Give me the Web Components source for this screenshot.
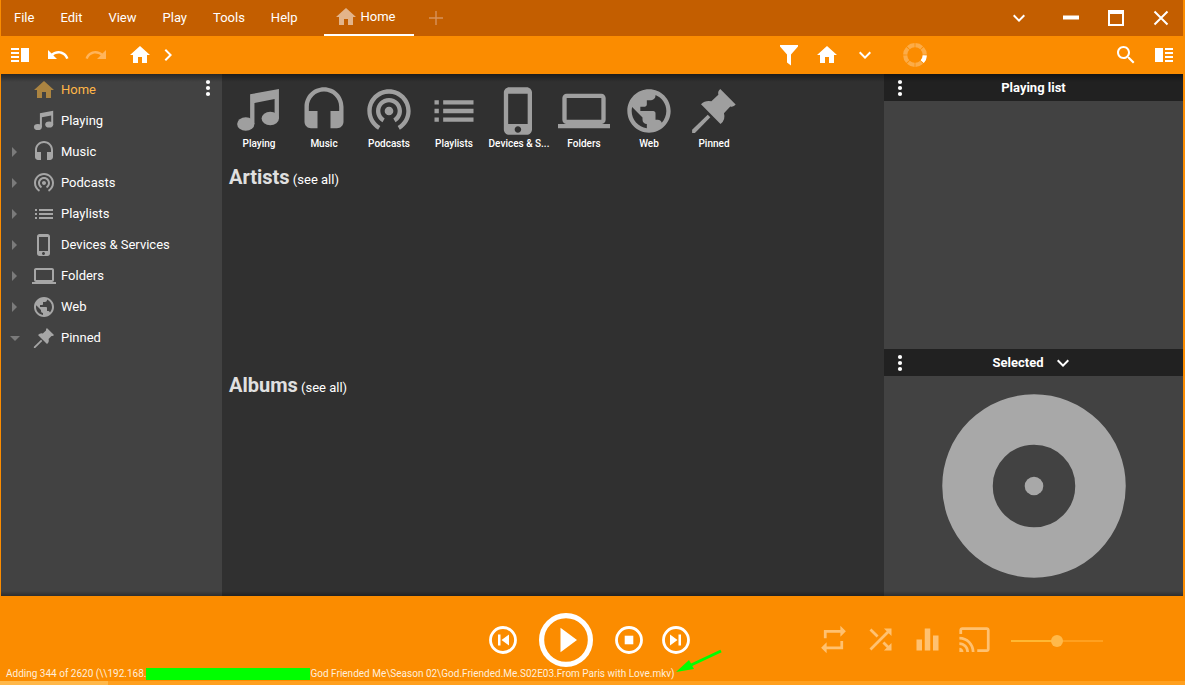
<!DOCTYPE html>
<html lang="en">
<head>
<meta charset="utf-8">
<title>Media player</title>
<style>
  html, body { margin: 0; }
  body { font: 400 13px/16px Roboto, sans-serif; color: #fff; background: #fb8c00; }
</style>
</head>
<body>
<mm-app></mm-app>
<script>
const ICONS = {
  home: '<path d="M10 20v-6h4v6h5v-8h3L12 3 2 12h3v8z"/>',
  plus: '<path d="M19 12.7h-6.3V19h-1.4v-6.3H5v-1.4h6.3V5h1.4v6.3H19z"/>',
  down: '<path d="M16.59 8.59L12 13.17 7.41 8.59 6 10l6 6 6-6z"/>',
  right: '<path d="M10 6L8.59 7.41 13.17 12l-4.58 4.59L10 18l6-6z"/>',
  min: '<path d="M4 9.5h16v4H4z"/>',
  max: '<path d="M4 4h16v16H4zM6 8v10h12V8z" fill-rule="evenodd"/>',
  close: '<path d="M5.5 5.5l13 13M18.5 5.5l-13 13" stroke="currentColor" stroke-width="2"/>',
  splitL: '<path d="M3 15h8v-2H3v2zm0 4h8v-2H3v2zm0-8h8V9H3v2zm0-6v2h8V5H3zm10 0h8v14h-8V5z"/>',
  splitR: '<path d="M13 15h8v-2h-8v2zm0 4h8v-2h-8v2zm0-8h8V9h-8v2zm0-6v2h8V5h-8zM3 5h8v14H3z"/>',
  undo: '<path d="M12.5 8c-2.65 0-5.05.99-6.9 2.6L2 7v9h9l-3.62-3.62c1.39-1.16 3.16-1.88 5.12-1.88 3.54 0 6.55 2.31 7.6 5.5l2.37-.78C21.08 11.03 17.15 8 12.5 8z"/>',
  redo: '<path d="M18.4 10.6C16.55 8.99 14.15 8 11.5 8c-4.65 0-8.58 3.03-9.96 7.22L3.9 16c1.05-3.19 4.05-5.5 7.6-5.5 1.95 0 3.73.72 5.12 1.88L13 16h9V7l-3.6 3.6z"/>',
  filter: '<path d="M3 2h18v1.5l-7 8V22.5l-4-3V11.500L3 3.500z"/>',
  search: '<path d="M15.5 14h-.79l-.28-.27C15.41 12.59 16 11.110 16 9.500 16 5.910 13.090 3 9.500 3S3 5.910 3 9.500 5.910 16 9.500 16c1.610 0 3.090-.590 4.230-1.570l.270.280v.790l5 4.990L20.490 19l-4.990-5zm-6 0C7.010 14 5 11.990 5 9.500S7.010 5 9.500 5 14 7.010 14 9.500 11.990 14 9.500 14z"/>',
  spinner: '<g fill="none" stroke="currentColor" stroke-width="4.200"><circle cx="12" cy="12" r="9.800" pathLength="80" stroke-dasharray="9 1" stroke-dashoffset="-.5" opacity=".28"/><circle cx="12" cy="12" r="9.800" pathLength="80" stroke-dasharray="9 71" stroke-dashoffset="-.5"/></g>',
  dots: '<circle cx="12" cy="6" r="2.100"/><circle cx="12" cy="12" r="2.100"/><circle cx="12" cy="18" r="2.100"/>',
  note: '<path d="M7.900 4.300L21.200 1.800V15.500h-2V6.500L9.900 8.300V18h-2z"/><ellipse cx="5.900" cy="18" rx="4" ry="3.100"/><ellipse cx="17.200" cy="15.500" rx="4" ry="3.100"/>',
  headset: '<path d="M12 1c-4.970 0-9 4.030-9 9v7c0 1.660 1.340 3 3 3h3v-8H5v-2c0-3.870 3.130-7 7-7s7 3.130 7 7v2h-4v8h3c1.660 0 3-1.340 3-3v-7c0-4.970-4.030-9-9-9z"/>',
  podcast: '<path transform="translate(0 -1)" d="M12 11c-1.100 0-2 .9-2 2s.9 2 2 2 2-.9 2-2-.9-2-2-2zm6 2c0-3.310-2.690-6-6-6s-6 2.690-6 6c0 2.220 1.210 4.150 3 5.190l1-1.740c-1.190-.7-2-1.970-2-3.450 0-2.210 1.790-4 4-4s4 1.790 4 4c0 1.480-.81 2.750-2 3.450l1 1.740c1.790-1.040 3-2.970 3-5.190zM12 3C6.480 3 2 7.480 2 13c0 3.700 2.010 6.920 4.990 8.650l1-1.730C5.610 18.530 4 15.960 4 13c0-4.420 3.580-8 8-8s8 3.580 8 8c0 2.960-1.610 5.530-4 6.920l1 1.730c2.990-1.730 5-4.950 5-8.650 0-5.520-4.480-10-10-10z"/>',
  list: '<path d="M3 13h2v-2H3v2zm0 4h2v-2H3v2zm0-8h2V7H3v2zm4 4h14v-2H7v2zm0 4h14v-2H7v2zM7 7v2h14V7H7z"/>',
  phone: '<path d="M15.500 1h-8C6.120 1 5 2.120 5 3.500v17C5 21.880 6.120 23 7.500 23h8c1.380 0 2.500-1.120 2.500-2.500v-17C18 2.120 16.880 1 15.500 1zm-4 21c-.83 0-1.500-.67-1.500-1.500s.67-1.500 1.500-1.500 1.500.67 1.500 1.500-.67 1.500-1.500 1.500zm4.500-4H7V4h9v14z"/>',
  laptop: '<path d="M20 18c1.100 0 2-.9 2-2V6c0-1.100-.9-2-2-2H4c-1.100 0-2 .9-2 2v10c0 1.100.9 2 2 2H0v2h24v-2h-4zM4 6h16v10H4V6z"/>',
  globe: '<path d="M12 2C6.480 2 2 6.480 2 12s4.480 10 10 10 10-4.480 10-10S17.520 2 12 2zm-1 17.930c-3.950-.49-7-3.850-7-7.930 0-.62.08-1.210.21-1.790L9 15v1c0 1.100.9 2 2 2v1.930zm6.900-2.540c-.26-.81-1-1.390-1.900-1.390h-1v-3c0-.55-.45-1-1-1H8v-2h2c.55 0 1-.45 1-1V7h2c1.100 0 2-.9 2-2v-.41c2.930 1.190 5 4.060 5 7.410 0 2.080-.8 3.970-2.100 5.390z"/>',
  pin: '<path d="M14.900 1.900L22 9q-.9 1.300-2.500.9L16.600 13q.9 3-1.600 5L6 8.900q2-2 4.800-1.400L14 4.500q-.4-1.500.9-2.600z"/><path d="M1.900 20.700L9.100 13.700 10.300 14.900 3.200 22.100H1.900z"/>',
  closed: '<path d="M9 17l5-5-5-5z"/>',
  open: '<path d="M7 10l5 5 5-5z"/>',
  prev: '<circle cx="14" cy="14" r="12.500" fill="none" stroke="currentColor" stroke-width="2.800"/><path d="M9 8.500h2.500v11H9zM20 8.500v11L12.500 14z"/>',
  next: '<circle cx="14" cy="14" r="12.500" fill="none" stroke="currentColor" stroke-width="2.800"/><path d="M16.500 8.500H19v11h-2.500zM8 8.500v11l7.500-5.500z"/>',
  stop: '<circle cx="14" cy="14" r="12.500" fill="none" stroke="currentColor" stroke-width="2.800"/><path d="M9.700 9.700h8.600v8.600H9.700z"/>',
  play: '<circle cx="27" cy="27" r="24.400" fill="none" stroke="currentColor" stroke-width="5.200"/><path d="M21.500 14.700v24.600L38 27z"/>',
  repeat: '<path d="M7 7h10v3l4-4-4-4v3H5v6h2V7zm10 10H7v-3l-4 4 4 4v-3h12v-6h-2v4z"/>',
  shuffle: '<path d="M10.590 9.170L5.410 4 4 5.410l5.170 5.170 1.420-1.410zM14.500 4l2.040 2.040L4 18.590 5.410 20 17.960 7.460 20 9.500V4h-5.500zm.33 9.410l-1.410 1.410 3.130 3.130L14.500 20H20v-5.500l-2.040 2.040-3.130-3.130z"/>',
  bars: '<path d="M10 20h4V4h-4v16zm-6 0h4v-8H4v8zM16 9v11h4V9h-4z"/>',
  cast: '<path d="M21 3H3c-1.100 0-2 .9-2 2v3h2V5h18v14h-7v2h7c1.100 0 2-.9 2-2V5c0-1.100-.9-2-2-2zM1 18v3h3c0-1.660-1.340-3-3-3zm0-4v2c2.760 0 5 2.240 5 5h2c0-3.870-3.130-7-7-7zm0-4v2c4.970 0 9 4.030 9 9h2c0-6.080-4.930-11-11-11z"/>'
};
const BOX = { prev: 28, next: 28, stop: 28, play: 54 };

function define(name, html) {
  const template = document.createElement('template');
  template.innerHTML = html;
  customElements.define(name, class extends HTMLElement {
    constructor() {
      super();
      this.attachShadow({ mode: 'open' }).append(template.content.cloneNode(true));
    }
  });
}

/* <mm-icon name size> draws one glyph in the current colour */
customElements.define('mm-icon', class extends HTMLElement {
  connectedCallback() {
    if (this.shadowRoot) return;
    const name = this.getAttribute('name');
    const size = this.getAttribute('size') || 24;
    const box = BOX[name] || 24;
    this.attachShadow({ mode: 'open' }).innerHTML =
      `<style>:host{display:block;flex:none}svg{display:block;overflow:visible}</style>
       <svg width="${size}" height="${size}" viewBox="0 0 ${box} ${box}" fill="currentColor" aria-hidden="true">${ICONS[name]}</svg>`;
  }
});

/* <mm-button icon label size> is an icon-only button */
customElements.define('mm-button', class extends HTMLElement {
  connectedCallback() {
    if (this.shadowRoot) return;
    this.attachShadow({ mode: 'open' }).innerHTML =
      `<style>
        :host { display: flex; flex: none; }
        button { flex: 1; display: flex; align-items: center; justify-content: center; margin: 0; padding: 0; border: 0; background: none; color: inherit; }
      </style>
      <button type="button" aria-label="${this.getAttribute('label')}"><mm-icon name="${this.getAttribute('icon')}" size="${this.getAttribute('size') || 24}"></mm-icon></button>`;
  }
});

define('mm-menu-bar', `
<style>
  :host { display: flex; height: 36px; background: #c35e00; }
  nav { display: flex; margin-right: 13px; }
  button { font: inherit; color: inherit; background: none; border: 0; margin: 0; padding: 0 13px; white-space: nowrap; }
  .tab { display: flex; align-items: center; gap: 3px; width: 90px; box-sizing: border-box; padding: 0 10px; border-bottom: 2px solid #fff; }
  .tab mm-icon { color: #e3b48a; }
  .add { width: 44px; color: #d8925a; }
  .spacer { flex: 1; }
  .more { width: 38px; margin-right: 10px; }
  .win { width: 45px; }
</style>
<nav aria-label="Menu">
  <button>File</button><button>Edit</button><button>View</button><button>Play</button><button>Tools</button><button>Help</button>
</nav>
<button class="tab"><mm-icon name="home"></mm-icon>Home</button>
<mm-button class="add" icon="plus" label="New tab"></mm-button>
<div class="spacer"></div>
<mm-button class="more" icon="down" label="More"></mm-button>
<mm-button class="win" icon="min" label="Minimize"></mm-button>
<mm-button class="win" icon="max" label="Maximize"></mm-button>
<mm-button class="win" icon="close" label="Close"></mm-button>`);

define('mm-toolbar', `
<style>
  :host { display: flex; justify-content: space-between; height: 38px; }
  div { display: flex; }
  mm-button { width: 38px; }
  .off { color: #ffb45a; }
  .home { width: 28px; margin-left: 11px; }
  .crumb { width: 28px; }
  .filters { margin-left: auto; }
  .side { width: 299px; justify-content: flex-end; align-items: stretch; }
  .busy { display: flex; align-items: center; padding-left: 19px; margin-right: auto; }
</style>
<div>
  <mm-button icon="splitL" label="Left panel"></mm-button>
  <mm-button icon="undo" label="Back"></mm-button>
  <mm-button class="off" icon="redo" label="Forward"></mm-button>
  <mm-button class="home" icon="home" label="Home"></mm-button>
  <mm-button class="crumb" icon="right" label="Browse"></mm-button>
</div>
<div class="filters">
  <mm-button icon="filter" label="Filter"></mm-button>
  <mm-button icon="home" label="View"></mm-button>
  <mm-button icon="down" label="View options"></mm-button>
</div>
<div class="side">
  <span class="busy"><mm-icon name="spinner"></mm-icon></span>
  <mm-button icon="search" label="Search"></mm-button>
  <mm-button icon="splitR" label="Right panel"></mm-button>
</div>`);

/* <mm-nav-item icon state> is one row of the media tree */
customElements.define('mm-nav-item', class extends HTMLElement {
  connectedCallback() {
    if (this.shadowRoot) return;
    const state = this.getAttribute('state');
    this.attachShadow({ mode: 'open' }).innerHTML =
      `<style>
        :host { display: block; }
        a { display: flex; align-items: center; gap: 5px; height: 31px; padding-left: 2px; color: inherit; text-decoration: none; }
        .arrow { width: 24px; color: #7b7b7b; }
        .icon { color: var(--icon, #a6a6a6); }
      </style>
      <a href="#"><span class="arrow">${state ? `<mm-icon name="${state}"></mm-icon>` : ''}</span>
      <mm-icon class="icon" name="${this.getAttribute('icon')}"></mm-icon><slot></slot></a>`;
  }
});

define('mm-sidebar', `
<style>
  :host { display: flex; width: 221px; flex: none; background: #424242; }
  nav { flex: 1; }
  .current { color: #ffb648; --icon: #ab8441; }
  mm-button { width: 28px; height: 28px; }
</style>
<nav aria-label="Library">
  <mm-nav-item class="current" icon="home">Home</mm-nav-item>
  <mm-nav-item icon="note">Playing</mm-nav-item>
  <mm-nav-item icon="headset" state="closed">Music</mm-nav-item>
  <mm-nav-item icon="podcast" state="closed">Podcasts</mm-nav-item>
  <mm-nav-item icon="list" state="closed">Playlists</mm-nav-item>
  <mm-nav-item icon="phone" state="closed">Devices &amp; Services</mm-nav-item>
  <mm-nav-item icon="laptop" state="closed">Folders</mm-nav-item>
  <mm-nav-item icon="globe" state="closed">Web</mm-nav-item>
  <mm-nav-item icon="pin" state="open">Pinned</mm-nav-item>
</nav>
<mm-button icon="dots" label="Library options"></mm-button>`);

customElements.define('mm-tile', class extends HTMLElement {
  connectedCallback() {
    if (this.shadowRoot) return;
    this.attachShadow({ mode: 'open' }).innerHTML =
      `<style>
        :host { display: block; width: 60px; }
        a { display: flex; flex-direction: column; align-items: center; color: inherit; text-decoration: none; }
        mm-icon { color: #9f9f9f; }
        span { font-size: 10px; line-height: 14px; white-space: nowrap; }
      </style>
      <a href="#"><mm-icon name="${this.getAttribute('icon')}" size="52"></mm-icon><span><slot></slot></span></a>`;
  }
});

define('mm-shelf', `
<style>
  :host { display: block; height: 208px; padding-left: 7px; }
  h2 { display: inline; margin: 0; font-size: 20px; line-height: 24px; font-weight: 700; color: #e0e0e0; }
  a { color: inherit; text-decoration: none; }
</style>
<h2><slot></slot></h2> <a href="#">(see all)</a>`);

define('mm-home', `
<style>
  :host { display: block; flex: 1; min-width: 0; background: #303030; }
  .tiles { display: flex; gap: 5px; padding: 11px 7px 14px; font-weight: 500; }
</style>
<div class="tiles">
  <mm-tile icon="note">Playing</mm-tile>
  <mm-tile icon="headset">Music</mm-tile>
  <mm-tile icon="podcast">Podcasts</mm-tile>
  <mm-tile icon="list">Playlists</mm-tile>
  <mm-tile icon="phone" title="Devices &amp; Services">Devices &amp; S...</mm-tile>
  <mm-tile icon="laptop">Folders</mm-tile>
  <mm-tile icon="globe">Web</mm-tile>
  <mm-tile icon="pin">Pinned</mm-tile>
</div>
<mm-shelf>Artists</mm-shelf>
<mm-shelf>Albums</mm-shelf>`);

define('mm-panel', `
<style>
  :host { display: flex; flex-direction: column; background: #424242; }
  header { display: grid; grid-template-columns: 32px 1fr 32px; align-items: center; height: 27px; background: #212121; }
  h2 { display: flex; justify-content: center; align-items: center; gap: 7px; margin: 0; font: inherit; font-weight: 700; }
</style>
<header><mm-button icon="dots" label="Panel options"></mm-button><h2><slot name="title"></slot></h2></header>
<slot></slot>`);

define('mm-side', `
<style>
  :host { display: flex; flex-direction: column; width: 299px; flex: none; }
  .list { flex: 1; }
  .disc { display: flex; justify-content: center; align-items: center; height: 220px; }
  .title { display: flex; align-items: center; gap: 7px; height: 27px; }
</style>
<mm-panel class="list"><span slot="title">Playing list</span></mm-panel>
<mm-panel>
  <span slot="title" class="title">Selected <mm-button icon="down" label="Choose content"></mm-button></span>
  <div class="disc">
    <svg width="184" height="184" viewBox="0 0 184 184" fill="#a8a8a8" role="img" aria-label="No artwork">
      <circle cx="92" cy="92" r="66.500" fill="none" stroke="#a8a8a8" stroke-width="50.500"/>
      <circle cx="92" cy="92" r="9.300"/>
    </svg>
  </div>
</mm-panel>`);

define('mm-player', `
<style>
  :host { display: grid; grid-template-columns: 1fr auto 1fr; align-items: center; height: 55px; padding-top: 16px; }
  .transport { grid-column: 2; display: flex; align-items: center; gap: 22px; padding-right: 6px; }
  .transport .next { margin-left: -3px; }
  .extra { grid-column: 3; display: flex; align-items: center; justify-content: flex-end; padding-right: 80px; color: #ffc170; }
  .extra mm-button { width: 47px; }
  input { -webkit-appearance: none; appearance: none; width: 92px; height: 12px; margin: 2px 0 0 13px; background: linear-gradient(90deg, #ffb833 50%, #ffa01f 50%) center / 100% 2px no-repeat; }
  input::-webkit-slider-thumb { -webkit-appearance: none; width: 12px; height: 12px; border-radius: 50%; background: #ffb94a; }
</style>
<div class="transport">
  <mm-button icon="prev" size="28" label="Previous"></mm-button>
  <mm-button icon="play" size="54" label="Play"></mm-button>
  <mm-button icon="stop" size="28" label="Stop"></mm-button>
  <mm-button class="next" icon="next" size="28" label="Next"></mm-button>
</div>
<div class="extra">
  <mm-button icon="repeat" size="33" label="Repeat"></mm-button>
  <mm-button icon="shuffle" size="33" label="Shuffle"></mm-button>
  <mm-button icon="bars" size="33" label="Equalizer"></mm-button>
  <mm-button icon="cast" size="33" label="Cast"></mm-button>
  <input type="range" min="0" max="100" value="50" aria-label="Volume">
</div>`);

define('mm-status', `
<style>
  :host { display: block; }
  .line { display: flex; height: 14px; padding-left: 5px; font-size: 10px; line-height: 14px; color: #ffeedb; }
  .text { position: relative; display: flex; align-items: center; white-space: nowrap; }
  .mask { width: 164px; height: 12px; background: #0f0; }
  .arrow { position: absolute; left: 100%; bottom: 8px; }
  progress { -webkit-appearance: none; appearance: none; display: block; width: calc(100% + 3px); height: 4px; margin: 0 -2px 0 -1px; border: 0; }
  progress::-webkit-progress-bar { background: #ffa01f; }
  progress::-webkit-progress-value { background: #ffb84a; }
</style>
<div class="line"><div class="text">
  <span>Adding 344 of 2620 (\\\\192.168.</span><span class="mask"></span><span>God Friended Me\\Season 02\\God.Friended.Me.S02E03.From Paris with Love.mkv)</span>
  <svg class="arrow" width="48" height="26" viewBox="0 0 48 26" aria-hidden="true"><path d="M46 4L14 19" stroke="#0f0" stroke-width="3"/><path d="M1 25L14 13l5 9z" fill="#0f0"/></svg>
</div></div>
<progress max="1185" value="108" aria-label="Import progress"></progress>`);

define('mm-app', `
<style>
  :host { display: flex; flex-direction: column; box-sizing: border-box; min-height: 100vh; padding: 0 2px 0 1px; background: #fb8c00; }
  main { position: relative; display: flex; flex: 1; }
  main::after { content: ""; position: absolute; inset: 0; pointer-events: none;
    background: linear-gradient(rgba(0,0,0,.4), rgba(0,0,0,0)) top / 100% 8px no-repeat, linear-gradient(rgba(0,0,0,0), rgba(0,0,0,.3)) bottom / 100% 5px no-repeat; }
</style>
<mm-menu-bar></mm-menu-bar>
<mm-toolbar></mm-toolbar>
<main><mm-sidebar></mm-sidebar><mm-home></mm-home><mm-side></mm-side></main>
<mm-player></mm-player>
<mm-status></mm-status>`);
</script>
</body>
</html>
